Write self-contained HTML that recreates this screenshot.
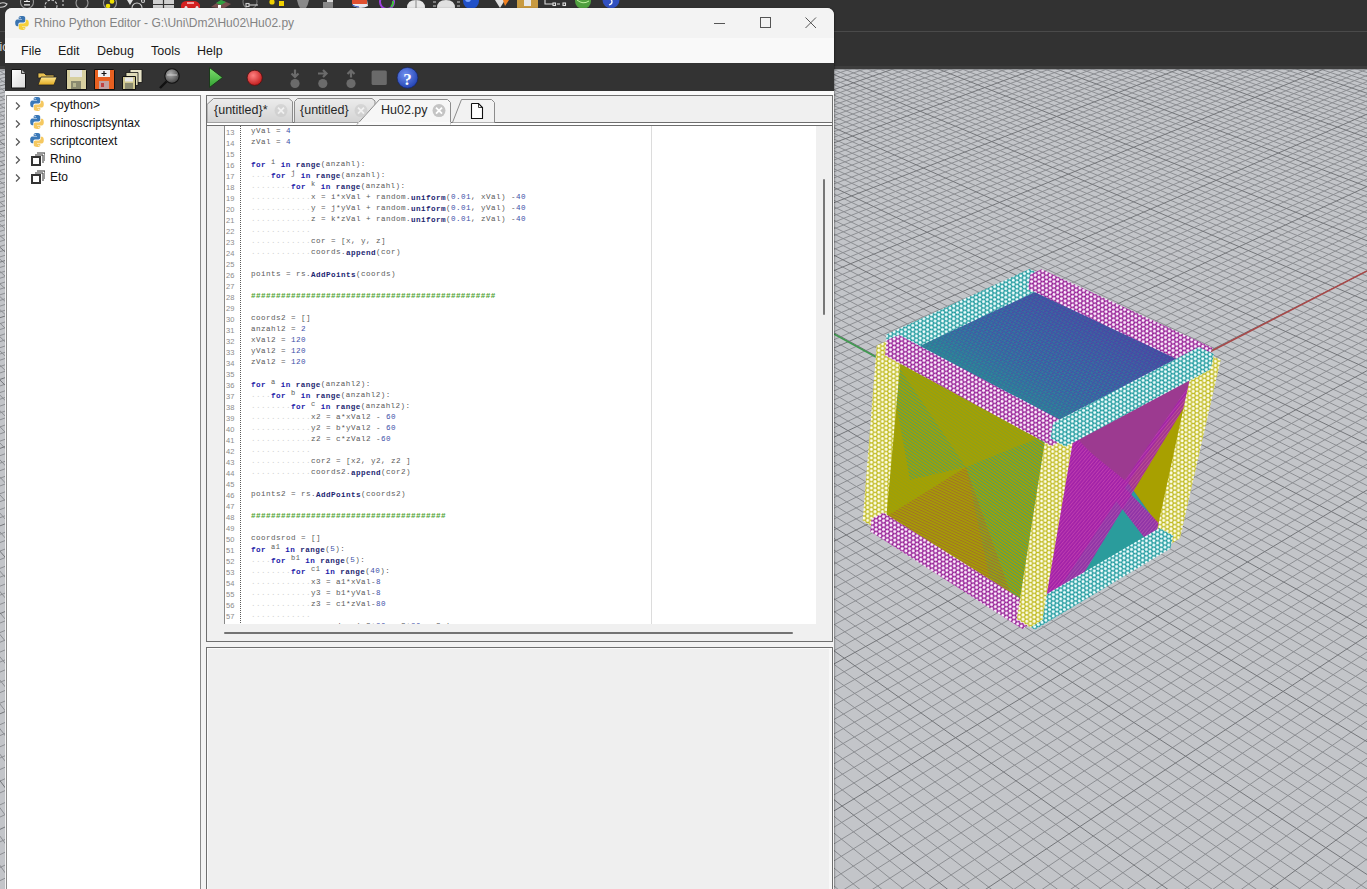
<!DOCTYPE html><html><head><meta charset="utf-8"><style>
*{margin:0;padding:0;box-sizing:border-box}
html,body{width:1367px;height:889px;overflow:hidden;background:#323232;font-family:"Liberation Sans",sans-serif}
.abs{position:absolute}
#vp{position:absolute;left:0;top:66px;width:1367px;height:823px;background:#c3c5c9;border-top:3px solid #3d3d3d;overflow:hidden}
#win{position:absolute;left:5px;top:8px;width:829px;height:881px;background:#f0f0f0;border-radius:7px 7px 0 0;overflow:hidden;box-shadow:1px 0 1.5px rgba(0,0,0,.3)}
#title{position:absolute;left:0;top:0;width:829px;height:30px;background:#f3f3f3}
#title .t{position:absolute;left:29px;top:8px;font-size:12px;color:#838383;white-space:nowrap}
#menu{position:absolute;left:0;top:30px;width:829px;height:25px;background:#f9f9f9}
#menu span{position:absolute;top:6px;font-size:12.5px;color:#1a1a1a}
#tb{position:absolute;left:0;top:55px;width:829px;height:28px;background:#333333}
#wstrip{position:absolute;left:0;top:83px;width:829px;height:4px;background:#fafafa}
#left{position:absolute;left:1px;top:87px;width:195px;height:800px;background:#fff;border:1px solid #8a8a8a}
.tr{position:absolute;left:0;font-size:12px;color:#111;white-space:nowrap}
#ed{position:absolute;left:201px;top:87px;width:627px;height:547px;border:1px solid #6f6f6f;background:#f0f0f0}
#code{position:absolute;left:0;top:30px;width:609px;height:498px;background:#fff;overflow:hidden}
#gut{position:absolute;left:0;top:0;width:18px;height:499px;background:#f0f0f0;border-right:1px solid #8a8a8a}
.ln{position:absolute;left:19px;width:20px;font-family:"Liberation Sans",sans-serif;font-size:7.5px;color:#8c8c8c;line-height:11px;height:11px}
.cl{position:absolute;left:44px;font-family:"Liberation Mono",monospace;font-size:7.6px;letter-spacing:0.44px;line-height:11px;height:11px;color:#5a5a5a;white-space:pre}
.cl .d{color:#cfcfcf}
.cl .k{color:#1c1ca8;font-weight:bold;position:relative;top:1px}
.cl .f{color:#1c2670;font-weight:bold;position:relative;top:1px}
.cl .v{position:relative;top:-2px;font-size:7px}
.cl .n{color:#4050a8}
.cl .c{color:#4aa02a;font-weight:bold}

.tabt{position:absolute;top:7px;font-size:12.5px;color:#262626;white-space:nowrap}
#dots{position:absolute;left:33px;top:0;width:1px;height:499px;background:repeating-linear-gradient(to bottom,#5a5a5a 0,#5a5a5a 1px,transparent 1px,transparent 2px)}
#edge{position:absolute;left:444px;top:0;width:1px;height:499px;background:#dcdcdc}
#vsb{position:absolute;left:609px;top:30px;width:16px;height:499px;background:#f0f0f0}
#vth{position:absolute;left:7px;top:53px;width:2px;height:136px;background:#777;border-radius:1px}
#hsb{position:absolute;left:0;top:529px;width:625px;height:16px;background:#f0f0f0}
#hth{position:absolute;left:17px;top:7px;width:569px;height:2px;background:#737373;border-radius:1px}
#out{position:absolute;left:201px;top:639px;width:627px;height:250px;border:1px solid #6f6f6f;border-bottom:none;background:#efefef;box-shadow:inset 1px 1px 0 #fbfbfb,inset -3px 0 0 #f8f8f8}
#win{background:#f3f3f3}

</style></head><body>
<svg class="abs" style="left:0;top:0" width="1367" height="32">
<rect width="1367" height="31" fill="#323232"/>
<rect y="31" width="1367" height="1" fill="#4a4a4a"/>
<g fill="none" stroke="#cfcfcf" stroke-width="1.1">
<path d="M-2 5q4-4 9-1q-2 4-9 3"/>
<circle cx="27" cy="2" r="6.5" stroke="#9a9a9a"/><path d="M24 1.5h6M24 4.8h6M27 -1v3" stroke="#f0f0f0" stroke-width="1.2"/>
<circle cx="51" cy="6" r="6" stroke-dasharray="2.5 1.5"/><path d="M63 0v2M63 4v2M63 8v1"/>
<circle cx="82" cy="3" r="6" stroke="#9a9a9a"/>
<circle cx="110" cy="3" r="6.5" stroke="#9a9a9a"/>
<circle cx="137" cy="8" r="5"/><circle cx="143" cy="1" r="1.5"/>
<circle cx="250" cy="2" r="7" stroke="#777"/><path d="M249 5h9" /><rect x="246" y="3.5" width="3" height="3"/>
<path d="M545 0v4h8M557 4h3" stroke="#ddd"/><rect x="553" y="3" width="2.5" height="2.5" stroke="#ddd"/><rect x="563" y="3" width="2.5" height="2.5" stroke="#ddd"/>
</g>
<circle cx="108" cy="6" r="2.3" fill="#f0e000"/><circle cx="112" cy="1.5" r="2.3" fill="#f0e000"/>
<path d="M127 0h6l-3 5z" fill="#e0e0e0"/>
<rect x="153" y="0" width="21" height="9" fill="#d0d0d0"/><path d="M163.5 0v9M153 4.5h21" stroke="#323232" stroke-width="1.2"/>
<path d="M181 5q1-4 6-4h7q4 0 6 4v3h-19z" fill="#d42020"/><circle cx="186" cy="7.5" r="1.5" fill="#eee"/><circle cx="197" cy="7.5" r="1.5" fill="#eee"/><rect x="187" y="2" width="7" height="2" fill="#f0a0a0"/>
<path d="M211 7l10-7 10 4-8 5z" fill="#7a5050"/><path d="M216 3l5-3 5 2-5 3z" fill="#30a040"/><rect x="218" y="5" width="3" height="3" fill="#fff"/>
<circle cx="272" cy="2" r="2.6" fill="#f0d000"/><rect x="279" y="1" width="5" height="5" fill="#f0d000"/>
<path d="M297 0h12q-1 5-3 8h-6q-2-3-3-8z" fill="#8a8a8a"/>
<rect x="327" y="0" width="6" height="8" fill="#d8d8d8"/><rect x="323" y="2" width="10" height="6" fill="#888"/>
<path d="M352 0h15l1 6q-7 4-15 0z" fill="#e8e8f0"/><path d="M352 0h15v4h-15z" fill="#e05030"/><path d="M352 5q4 2 7 2" stroke="#3050c0" fill="none"/>
<circle cx="387" cy="2" r="7" fill="none" stroke="#a040e0" stroke-width="2"/><path d="M381 -2a7 7 0 0 1 12 0" stroke="#f0d000" stroke-width="2" fill="none"/><path d="M393 1a7 7 0 0 1 -2 6" stroke="#40c040" stroke-width="2" fill="none"/>
<path d="M407 8q0-8 9-8q9 0 9 8z" fill="#e8e8e8"/><path d="M416 0v8" stroke="#888"/>
<path d="M437 8q0-8 9-8q9 0 9 8z" fill="#e0e0e0"/><path d="M433 2h3M433 6h3M457 2h3M457 6h3" stroke="#ccc"/>
<circle cx="471" cy="1" r="8" fill="#2050c8"/><circle cx="468" cy="-1" r="3" fill="#80a8ff"/>
<path d="M495 0h10l-5 8z" fill="#e0e0e0"/><path d="M503 0h6l-4 6z" fill="#f08020"/>
<rect x="517" y="0" width="21" height="8" fill="#c89a40"/><rect x="524" y="0" width="7" height="6" fill="#e8e8e8"/>
<circle cx="583" cy="1" r="8" fill="#50a040"/><path d="M577 0q6 5 12 1" stroke="#c0f0a0" fill="none"/>
<circle cx="611" cy="0" r="8.5" fill="#3050c0"/><path d="M609 -1q3 0 3 3q0 2-3 3" stroke="#fff" stroke-width="1.3" fill="none"/>
</svg>
<div class="abs" style="left:-0.5px;top:40px;font-size:12px;color:#d8d8d8">ic</div>
<div id="vp"><svg class="abs" style="left:0;top:0" width="1367" height="820"><rect x="0" y="0" width="1367" height="1" fill="#9a9c9f"/><path d="M443.7 1702.0L-548.8 124.4M465.0 1684.4L-538.2 121.7M486.0 1667.1L-527.7 118.9M506.7 1649.9L-517.2 116.2M527.2 1633.0L-506.7 113.5M547.3 1616.3L-496.4 110.9M567.3 1599.9L-486.0 108.2M587.0 1583.6L-475.8 105.5M606.4 1567.5L-465.5 102.9M644.5 1536.0L-445.2 97.7M663.2 1520.5L-435.2 95.1M681.7 1505.2L-425.1 92.5M700.0 1490.2L-415.2 89.9M718.0 1475.2L-405.2 87.3M735.8 1460.5L-395.4 84.8M753.4 1446.0L-385.5 82.2M770.8 1431.6L-375.7 79.7M788.0 1417.4L-366.0 77.2M821.8 1389.4L-346.7 72.2M838.4 1375.7L-337.1 69.7M854.8 1362.2L-327.5 67.3M871.0 1348.8L-318.0 64.8M887.0 1335.5L-308.5 62.4M902.8 1322.4L-299.1 59.9M918.5 1309.5L-289.8 57.5M934.0 1296.7L-280.4 55.1M949.3 1284.0L-271.1 52.7M979.4 1259.1L-252.7 47.9M994.2 1246.9L-243.5 45.6M1008.9 1234.8L-234.4 43.2M1023.3 1222.8L-225.4 40.9M1037.7 1210.9L-216.3 38.5M1051.9 1199.2L-207.3 36.2M1065.9 1187.6L-198.4 33.9M1079.7 1176.1L-189.5 31.6M1093.5 1164.8L-180.6 29.3M1120.5 1142.4L-163.0 24.8M1133.8 1131.4L-154.3 22.5M1147.0 1120.6L-145.6 20.3M1160.0 1109.8L-136.9 18.0M1172.9 1099.1L-128.3 15.8M1185.6 1088.6L-119.7 13.6M1198.3 1078.1L-111.2 11.4M1210.8 1067.8L-102.7 9.2M1223.1 1057.6L-94.2 7.0M1247.5 1037.4L-77.4 2.7M1259.5 1027.5L-69.0 0.5M1271.4 1017.7L-60.7 -1.7M1283.2 1007.9L-52.4 -3.8M1294.9 998.3L-44.2 -5.9M1306.4 988.7L-36.0 -8.0M1317.8 979.3L-27.8 -10.2M1329.2 969.9L-19.7 -12.3M1340.4 960.6L-11.5 -14.3M1362.5 942.4L4.5 -18.5M1373.4 933.3L12.5 -20.6M1384.2 924.4L20.5 -22.6M1394.9 915.6L28.4 -24.7M1405.5 906.8L36.3 -26.7M1416.0 898.1L44.2 -28.7M1426.4 889.5L52.0 -30.8M1436.7 881.0L59.8 -32.8M1446.9 872.6L67.5 -34.8M1467.1 855.9L83.0 -38.8M1477.0 847.7L90.6 -40.7M1486.8 839.6L98.2 -42.7M1496.6 831.5L105.8 -44.7M1506.3 823.5L113.4 -46.6M1515.9 815.6L120.9 -48.6M1525.4 807.7L128.4 -50.5M1534.8 799.9L135.9 -52.4M1544.1 792.2L143.3 -54.3M1562.5 777.0L158.1 -58.2M1571.6 769.4L165.4 -60.0M1580.6 762.0L172.7 -61.9M1589.6 754.6L180.0 -63.8M1598.5 747.3L187.3 -65.7M1607.2 740.0L194.5 -67.6M1616.0 732.8L201.7 -69.4M1624.6 725.7L208.8 -71.3M1633.2 718.6L216.0 -73.1M1650.1 704.6L230.1 -76.8M1658.4 697.7L237.2 -78.6M1666.7 690.8L244.2 -80.4M1674.9 684.0L251.2 -82.2M1683.1 677.3L258.1 -84.0M1691.2 670.6L265.0 -85.8M1699.2 664.0L271.9 -87.6M1707.2 657.4L278.8 -89.3M1715.1 650.9L285.7 -91.1M1730.6 638.0L299.3 -94.6M1738.4 631.6L306.0 -96.4M1746.0 625.3L312.8 -98.1M1753.6 619.0L319.5 -99.8M1761.1 612.8L326.2 -101.6M1768.6 606.6L332.8 -103.3M1776.0 600.5L339.4 -105.0M1783.3 594.4L346.0 -106.7M1790.6 588.4L352.6 -108.4M1805.0 576.5L365.7 -111.8M1812.2 570.6L372.2 -113.5M1819.2 564.7L378.7 -115.1M1826.2 558.9L385.1 -116.8M1833.2 553.2L391.5 -118.4M1840.1 547.5L397.9 -120.1M1847.0 541.8L404.3 -121.7M1853.8 536.2L410.6 -123.4M1860.5 530.6L417.0 -125.0M1873.9 519.5L429.5 -128.3M1880.5 514.0L435.8 -129.9M1887.1 508.6L442.0 -131.5M1893.6 503.2L448.2 -133.1M1900.1 497.9L454.4 -134.7M1906.5 492.6L460.5 -136.3M1912.9 487.3L466.7 -137.9M1919.2 482.1L472.8 -139.4M1925.5 476.9L478.9 -141.0M1937.9 466.6L491.0 -144.1M1944.0 461.5L497.0 -145.7M1950.1 456.5L503.0 -147.2M1956.2 451.5L508.9 -148.8M1962.2 446.5L514.9 -150.3M1968.2 441.6L520.8 -151.8M1974.1 436.6L526.7 -153.4M1980.0 431.8L532.6 -154.9M1985.9 426.9L538.5 -156.4M1997.5 417.4L550.1 -159.4M2003.2 412.6L555.9 -160.9M2008.9 407.9L561.7 -162.4M2014.5 403.2L567.4 -163.9M2020.2 398.6L573.2 -165.4M2025.7 394.0L578.9 -166.8M2031.3 389.4L584.6 -168.3M2036.8 384.8L590.2 -169.8M2042.2 380.3L595.9 -171.2M2053.1 371.4L607.1 -174.1M2058.4 366.9L612.7 -175.6M2063.8 362.5L618.2 -177.0M2069.0 358.2L623.8 -178.4M2074.3 353.8L629.3 -179.9M2079.5 349.5L634.8 -181.3M2084.7 345.2L640.3 -182.7M2089.8 341.0L645.8 -184.1M2095.0 336.7L651.2 -185.5M2105.1 328.4L662.0 -188.3M2110.1 324.2L667.4 -189.7M2115.1 320.1L672.8 -191.1M2120.1 316.0L678.1 -192.5M2125.0 311.9L683.5 -193.8M2129.9 307.9L688.8 -195.2M2134.7 303.9L694.1 -196.6M2139.6 299.9L699.3 -197.9M2144.4 295.9L704.6 -199.3M2153.9 288.0L715.0 -202.0M2158.6 284.1L720.2 -203.3M2163.3 280.3L725.4 -204.7M2167.9 276.4L730.6 -206.0M2172.6 272.6L735.7 -207.3M2177.2 268.8L740.8 -208.7M2181.7 265.0L746.0 -210.0M2186.3 261.3L751.0 -211.3M2190.8 257.5L756.1 -212.6M2199.7 250.1L766.2 -215.2M457.7 1712.6L2207.9 253.4M442.9 1689.3L2193.8 248.9M428.4 1666.3L2179.9 244.3M414.2 1643.8L2166.0 239.8M400.2 1621.7L2152.3 235.4M386.5 1600.0L2138.7 231.0M373.0 1578.6L2125.2 226.6M359.7 1557.7L2111.8 222.2M346.7 1537.0L2098.5 217.9M321.3 1496.9L2072.2 209.4M308.9 1477.3L2059.3 205.2M296.8 1458.0L2046.4 201.0M284.8 1439.1L2033.7 196.9M273.0 1420.4L2021.0 192.7M261.4 1402.1L2008.4 188.7M250.0 1384.1L1996.0 184.6M238.8 1366.3L1983.6 180.6M227.8 1348.9L1971.4 176.6M206.2 1314.7L1947.1 168.7M195.7 1298.1L1935.1 164.8M185.3 1281.7L1923.2 161.0M175.1 1265.5L1911.4 157.2M165.1 1249.6L1899.7 153.4M155.2 1233.9L1888.1 149.6M145.4 1218.5L1876.6 145.8M135.8 1203.3L1865.1 142.1M126.3 1188.3L1853.8 138.4M107.8 1159.0L1831.3 131.1M98.7 1144.6L1820.2 127.5M89.8 1130.5L1809.2 123.9M81.0 1116.6L1798.3 120.4M72.3 1102.8L1787.4 116.9M63.7 1089.3L1776.6 113.4M55.3 1075.9L1765.9 109.9M46.9 1062.7L1755.3 106.4M38.7 1049.7L1744.7 103.0M22.6 1024.2L1723.9 96.2M14.7 1011.7L1713.6 92.9M7.0 999.4L1703.3 89.5M-0.7 987.3L1693.1 86.2M-8.3 975.3L1683.0 83.0M-15.8 963.4L1673.0 79.7M-23.2 951.8L1663.0 76.5M-30.5 940.2L1653.1 73.3M-37.7 928.8L1643.3 70.1M-51.8 906.5L1623.9 63.8M-58.7 895.5L1614.3 60.6M-65.5 884.7L1604.7 57.5M-72.3 874.0L1595.2 54.4M-79.0 863.5L1585.8 51.4M-85.6 853.1L1576.5 48.3M-92.1 842.8L1567.2 45.3M-98.5 832.6L1557.9 42.3M-104.8 822.5L1548.8 39.4M-117.3 802.8L1530.6 33.5M-123.5 793.1L1521.6 30.5M-129.5 783.5L1512.7 27.6M-135.5 774.0L1503.8 24.8M-141.4 764.7L1495.0 21.9M-147.3 755.4L1486.3 19.1M-153.0 746.3L1477.6 16.2M-158.8 737.2L1469.0 13.4M-164.4 728.3L1460.4 10.6M-175.5 710.7L1443.4 5.1M-181.0 702.0L1435.0 2.4M-186.4 693.5L1426.6 -0.3M-191.7 685.0L1418.3 -3.0M-197.0 676.7L1410.1 -5.7M-202.2 668.4L1401.9 -8.4M-207.4 660.2L1393.7 -11.0M-212.5 652.1L1385.6 -13.6M-217.6 644.1L1377.6 -16.2M-227.5 628.4L1361.7 -21.4M-232.4 620.6L1353.8 -24.0M-237.3 613.0L1345.9 -26.5M-242.1 605.4L1338.1 -29.1M-246.8 597.9L1330.4 -31.6M-251.5 590.4L1322.7 -34.1M-256.2 583.1L1315.1 -36.6M-260.8 575.8L1307.4 -39.0M-265.3 568.6L1299.9 -41.5M-274.3 554.4L1284.9 -46.3M-278.7 547.4L1277.5 -48.8M-283.1 540.5L1270.1 -51.2M-287.4 533.6L1262.8 -53.5M-291.7 526.8L1255.5 -55.9M-296.0 520.1L1248.3 -58.2M-300.2 513.5L1241.1 -60.6M-304.3 506.9L1233.9 -62.9M-308.5 500.3L1226.8 -65.2M-316.6 487.5L1212.7 -69.8M-320.6 481.1L1205.7 -72.1M-324.6 474.9L1198.8 -74.3M-328.5 468.6L1191.9 -76.6M-332.4 462.5L1185.0 -78.8M-336.2 456.4L1178.2 -81.0M-340.1 450.3L1171.4 -83.2M-343.8 444.3L1164.7 -85.4M-347.6 438.4L1158.0 -87.6M-355.0 426.7L1144.7 -91.9M-358.6 420.9L1138.1 -94.0M-362.2 415.2L1131.5 -96.2M-365.8 409.6L1125.0 -98.3M-369.4 403.9L1118.5 -100.4M-372.9 398.4L1112.1 -102.5M-376.4 392.9L1105.7 -104.6M-379.8 387.4L1099.3 -106.6M-383.3 382.0L1093.0 -108.7M-390.0 371.3L1080.4 -112.8M-393.4 366.0L1074.2 -114.8M-396.7 360.8L1068.0 -116.8M-399.9 355.6L1061.8 -118.8M-403.2 350.4L1055.7 -120.8M-406.4 345.3L1049.6 -122.8M-409.6 340.3L1043.6 -124.7M-412.8 335.3L1037.5 -126.7M-415.9 330.3L1031.6 -128.6M-422.1 320.5L1019.7 -132.5M-425.2 315.6L1013.8 -134.4M-428.2 310.8L1007.9 -136.3M-431.2 306.1L1002.1 -138.2M-434.2 301.3L996.3 -140.1M-437.2 296.7L990.5 -142.0M-440.1 292.0L984.8 -143.8M-443.0 287.4L979.1 -145.7M-445.9 282.8L973.4 -147.5M-451.6 273.8L962.1 -151.2M-454.5 269.3L956.5 -153.0M-457.3 264.9L951.0 -154.8M-460.0 260.5L945.5 -156.6M-462.8 256.1L940.0 -158.4M-465.5 251.8L934.5 -160.2M-468.2 247.5L929.0 -161.9M-470.9 243.3L923.6 -163.7M-473.6 239.1L918.2 -165.4M-478.9 230.7L907.6 -168.9M-481.5 226.6L902.2 -170.6M-484.1 222.5L897.0 -172.4M-486.6 218.4L891.7 -174.1M-489.2 214.4L886.5 -175.8M-491.7 210.4L881.3 -177.4M-494.2 206.4L876.1 -179.1M-496.7 202.5L871.0 -180.8M-499.2 198.6L865.9 -182.5M-504.1 190.8L855.7 -185.8M-506.5 187.0L850.7 -187.4M-508.9 183.2L845.7 -189.0M-511.2 179.4L840.7 -190.6M-513.6 175.7L835.7 -192.3M-516.0 172.0L830.8 -193.9M-518.3 168.3L825.9 -195.5M-520.6 164.7L821.0 -197.0M-522.9 161.0L816.1 -198.6M-527.4 153.8L806.4 -201.8M-529.7 150.3L801.6 -203.3M-531.9 146.8L796.9 -204.9M-534.1 143.2L792.1 -206.4M-536.3 139.8L787.4 -208.0M-538.5 136.3L782.7 -209.5M-540.7 132.9L778.0 -211.0M-542.8 129.5L773.3 -212.5M-545.0 126.1L768.7 -214.0" stroke="#8a8c90" stroke-width="0.95" fill="none"/><path d="M625.6 1551.7L-455.4 100.3M805.0 1403.3L-356.3 74.7M964.4 1271.5L-261.9 50.3M1107.1 1153.6L-171.8 27.0M1235.4 1047.4L-85.8 4.8M1351.5 951.5L-3.5 -16.4M1457.0 864.2L75.3 -36.8M1553.4 784.5L150.7 -56.3M1641.7 711.5L223.1 -74.9M1722.9 644.4L292.5 -92.9M1797.8 582.4L359.2 -110.1M1867.3 525.0L423.3 -126.6M1931.7 471.7L484.9 -142.6M1991.7 422.1L544.3 -157.9M2047.7 375.8L601.5 -172.7M2100.1 332.5L656.6 -186.9M2149.1 291.9L709.8 -200.7M2195.3 253.8L761.2 -213.9M333.9 1516.8L2085.3 213.6M216.9 1331.7L1959.2 172.7M117.0 1173.5L1842.5 134.8M30.6 1036.9L1734.3 99.6M-44.8 917.6L1633.6 66.9M-111.1 812.6L1539.7 36.4M-170.0 719.4L1451.9 7.9M-222.6 636.2L1369.6 -18.8M-269.8 561.4L1292.4 -43.9M-312.5 493.9L1219.7 -67.5M-351.3 432.5L1151.3 -89.7M-386.7 376.6L1086.7 -110.7M-419.0 325.4L1025.6 -130.6M-448.8 278.3L967.7 -149.4M-476.2 234.9L912.9 -167.2M-501.6 194.7L860.8 -184.1M-525.2 157.4L811.3 -200.2M-547.1 122.7L764.1 -215.5" stroke="#74767a" stroke-width="1.0" fill="none"/><path d="M834.0 265.0L890.0 295.8" stroke="#3f9a4f" stroke-width="1.6"/><path d="M1195.0 290.5L1367.0 201.9" stroke="#a84848" stroke-width="1.6"/></svg></div><svg class="abs" style="left:0;top:0" width="1367" height="889"><defs><pattern id="pm" width="4.3" height="7.4" patternUnits="userSpaceOnUse" patternTransform="rotate(30)"><rect width="4.3" height="7.4" fill="#941c94"/><circle cx="2.15" cy="1.85" r="1.6" fill="#fdf0fd"/><circle cx="0" cy="5.55" r="1.6" fill="#fdf0fd"/><circle cx="4.3" cy="5.55" r="1.6" fill="#fdf0fd"/></pattern>
<pattern id="pc" width="4.3" height="7.4" patternUnits="userSpaceOnUse" patternTransform="rotate(-30)"><rect width="4.3" height="7.4" fill="#1f9a9e"/><circle cx="2.15" cy="1.85" r="1.6" fill="#f0fdfd"/><circle cx="0" cy="5.55" r="1.6" fill="#f0fdfd"/><circle cx="4.3" cy="5.55" r="1.6" fill="#f0fdfd"/></pattern>
<pattern id="py" width="4.3" height="7.4" patternUnits="userSpaceOnUse" patternTransform="rotate(90)"><rect width="4.3" height="7.4" fill="#c0ba20"/><circle cx="2.15" cy="1.85" r="1.65" fill="#fdfde8"/><circle cx="0" cy="5.55" r="1.65" fill="#fdfde8"/><circle cx="4.3" cy="5.55" r="1.65" fill="#fdfde8"/></pattern>
<pattern id="ht" width="4" height="3.2" patternUnits="userSpaceOnUse" patternTransform="rotate(28)"><rect width="4" height="3.2" fill="#2f8f92"/><rect y="0" width="4" height="1.1" fill="#3a5aa8"/><rect x="0" y="1.6" width="2" height="0.9" fill="#6a3a9a"/></pattern>
<pattern id="hteal" width="2.6" height="2.6" patternUnits="userSpaceOnUse" patternTransform="rotate(35)"><rect y="0" width="2.6" height="1" fill="#2aa08a"/></pattern>
<pattern id="hred" width="2.6" height="2.6" patternUnits="userSpaceOnUse" patternTransform="rotate(25)"><rect y="0" width="2.6" height="1.1" fill="#9a2a6a"/></pattern>
<pattern id="hmag" width="2.6" height="2.6" patternUnits="userSpaceOnUse" patternTransform="rotate(-50)"><rect width="2.6" height="2.6" fill="#a020a8"/><rect y="0" width="2.6" height="1" fill="#c040b0"/></pattern>
<linearGradient id="gtop" gradientUnits="userSpaceOnUse" x1="1080" y1="300" x2="1010" y2="410"><stop offset="0" stop-color="#5030a8"/><stop offset=".55" stop-color="#3a50b0" stop-opacity=".6"/><stop offset="1" stop-color="#209a90"/></linearGradient></defs><path d="M886.0 348.0 L1048.0 434.0 L1020.0 620.0 L871.0 526.0Z" fill="#a6a000"/><path d="M886.0 348.0 L966.0 467.0 L871.0 526.0Z" fill="url(#hteal)" opacity=".12"/><path d="M886.0 348.0 L1048.0 434.0 L966.0 467.0Z" fill="url(#hteal)" opacity=".22"/><path d="M886.0 348.0 L966.0 467.0 L910.0 480.0Z" fill="url(#hteal)" opacity=".6"/><path d="M1048.0 434.0 L1020.0 620.0 L966.0 467.0Z" fill="url(#hteal)" opacity=".75"/><path d="M871.0 526.0 L1020.0 620.0 L966.0 467.0Z" fill="url(#hred)" opacity=".4"/><path d="M990.0 580.0 L1020.0 620.0 L966.0 467.0Z" fill="url(#hteal)" opacity=".35"/><path d="M1070.0 436.0 L1208.0 362.0 L1170.0 542.0 L1040.0 618.0Z" fill="#a52aa5"/><path d="M1070.0 436.0 L1208.0 362.0 L1128.0 483.0Z" fill="#9c3a90"/><path d="M1208.0 362.0 L1170.0 542.0 L1128.0 483.0Z" fill="#a8a000"/><path d="M1170.0 542.0 L1040.0 618.0 L1128.0 483.0Z" fill="#2a9c9c"/><path d="M1067.5 438.2 L1151.7 547.2 L1168.3 532.8 L1072.5 433.8Z" fill="url(#hmag)" opacity=".85"/><path d="M1205.5 360.4 L1041.6 604.6 L1058.4 615.4 L1210.5 363.6Z" fill="url(#hmag)" opacity=".85"/><path d="M1070.0 436.0 L1040.0 618.0 L1128.0 483.0Z" fill="url(#hmag)" opacity=".9"/><path d="M888.8 341.7 L1035.2 274.2 L1209.3 354.7 L1060.3 433.4Z" fill="url(#ht)"/><path d="M888.8 341.7 L1035.2 274.2 L1209.3 354.7 L1060.3 433.4Z" fill="url(#gtop)" opacity=".55"/><path d="M885.1 349.4 L886.4 334.4 L1029.6 268.9 L1042.7 274.9 L1040.5 289.5 L897.9 356.3Z" fill="url(#pc)"/><path d="M1028.2 289.1 L1030.2 274.5 L1041.5 269.3 L1212.1 347.5 L1208.7 362.8 L1197.3 368.8Z" fill="url(#pm)"/><path d="M862.7 520.5 L876.7 345.6 L889.1 339.9 L901.8 346.6 L885.9 521.8 L874.3 527.9Z" fill="url(#py)"/><path d="M1155.6 536.9 L1194.2 358.7 L1205.5 352.7 L1220.7 359.7 L1180.0 538.3 L1169.4 544.7Z" fill="url(#py)"/><path d="M870.4 531.5 L871.5 518.7 L883.2 512.6 L1036.4 608.6 L1034.2 621.8 L1022.3 628.9Z" fill="url(#pm)"/><path d="M1021.2 621.0 L1023.4 607.8 L1159.4 527.9 L1173.3 535.6 L1170.4 548.6 L1034.9 629.7Z" fill="url(#pc)"/><path d="M1016.8 618.9 L1045.6 436.8 L1058.3 430.1 L1073.4 438.2 L1042.3 620.5 L1030.5 627.6Z" fill="url(#py)"/><path d="M885.2 355.6 L886.5 340.6 L899.1 334.9 L1067.2 423.6 L1064.6 439.3 L1051.8 446.1Z" fill="url(#pm)"/><path d="M1050.5 438.6 L1053.0 422.9 L1198.7 346.9 L1214.0 354.0 L1210.6 369.3 L1065.6 446.7Z" fill="url(#pc)"/></svg><div id="win">
<div id="title"><svg class="abs" style="left:9px;top:7px" width="16" height="16" viewBox="0 0 16 16">
<path d="M7.9 1C4.5 1 4.7 2.5 4.7 2.5v1.5h3.3v.5H3.4S1.2 4.3 1.2 7.8s1.9 3.4 1.9 3.4h1.2V9.5s-.1-1.9 1.9-1.9h3.2s1.8 0 1.8-1.8V2.9S11.6 1 7.9 1zM6.1 2.1a.6.6 0 1 1 0 1.2.6.6 0 0 1 0-1.2z" fill="#3a74b0"/>
<path d="M8.1 15c3.4 0 3.2-1.5 3.2-1.5V12H8v-.5h4.6s2.2.2 2.2-3.3-1.9-3.4-1.9-3.4h-1.2v1.7s.1 1.9-1.9 1.9H6.6s-1.8 0-1.8 1.8v2.9S4.4 15 8.1 15zm1.8-1.1a.6.6 0 1 1 0-1.2.6.6 0 0 1 0 1.2z" fill="#f5d03a"/></svg>
<div class="t">Rhino Python Editor - G:\Uni\Dm2\Hu02\Hu02.py</div>
<svg class="abs" style="left:708px;top:8px" width="14" height="14"><line x1="1" y1="7.5" x2="12" y2="7.5" stroke="#555" stroke-width="1"/></svg>
<svg class="abs" style="left:754px;top:8px" width="14" height="14"><rect x="1.5" y="1.5" width="10" height="10" fill="none" stroke="#555" stroke-width="1"/></svg>
<svg class="abs" style="left:799px;top:8px" width="14" height="14"><path d="M1.5 1.5L12 12M12 1.5L1.5 12" stroke="#555" stroke-width="1"/></svg>
</div>
<div id="menu"><span style="left:16px">File</span><span style="left:53px">Edit</span><span style="left:92px">Debug</span><span style="left:146px">Tools</span><span style="left:192px">Help</span></div>
<div id="tb"><svg class="abs" style="left:0;top:0" width="829" height="28">
<defs>
<linearGradient id="gdoc" x1="0" y1="0" x2="1" y2="1"><stop offset="0" stop-color="#ffffff"/><stop offset="1" stop-color="#d8d8d8"/></linearGradient>
<linearGradient id="gfold" x1="0" y1="0" x2="0" y2="1"><stop offset="0" stop-color="#ffe890"/><stop offset="1" stop-color="#e0a820"/></linearGradient>
<linearGradient id="gplay" x1="0" y1="0" x2="0" y2="1"><stop offset="0" stop-color="#80e070"/><stop offset="1" stop-color="#30a030"/></linearGradient>
<radialGradient id="grec" cx=".4" cy=".35" r=".7"><stop offset="0" stop-color="#ff8080"/><stop offset="1" stop-color="#c01818"/></radialGradient>
<radialGradient id="ghelp" cx=".4" cy=".35" r=".7"><stop offset="0" stop-color="#7090f0"/><stop offset="1" stop-color="#2040b0"/></radialGradient>
<radialGradient id="glens" cx=".4" cy=".35" r=".7"><stop offset="0" stop-color="#b0b0b0"/><stop offset="1" stop-color="#404040"/></radialGradient>
</defs>
<path d="M6.5 6.5h10l4 4v14.5h-14z" fill="url(#gdoc)" stroke="#111" stroke-width="1"/><path d="M16.5 6.5v4h4" fill="#bbb" stroke="#111" stroke-width=".8"/>
<path d="M33 10h6l2 2h8v3H33z" fill="#e8c050" stroke="#222" stroke-width=".8"/><path d="M33 22l3-8h16l-3 8z" fill="url(#gfold)" stroke="#222" stroke-width=".8"/>
<g transform="translate(61,6)"><path d="M.5 .5h19l1 1v19h-20z" fill="#d8d0a0" stroke="#111" stroke-width="1"/><rect x="4" y="1" width="12" height="7" fill="#e8e8e8"/><rect x="5" y="12" width="10" height="8" fill="#8a8a70"/><rect x="7" y="14" width="3" height="4" fill="#b8b890"/></g>
<g transform="translate(89,6)"><path d="M.5 .5h19l1 1v19h-20z" fill="#e86020" stroke="#111" stroke-width="1"/><rect x="4" y="1" width="12" height="7" fill="#f0f0f0"/><path d="M10 2v5M7.5 4.5h5" stroke="#111" stroke-width="1.2"/><rect x="5" y="12" width="10" height="8" fill="#c0a0a0"/><rect x="7" y="14" width="3" height="4" fill="#c04040"/></g>
<g transform="translate(117,6)"><path d="M8 .5h12v13h-12z" fill="#e8e4c8" stroke="#111" stroke-width=".8"/><path d="M4 3.5h12v13h-12z" fill="#e0dcb8" stroke="#111" stroke-width=".8"/><path d="M.5 7.5h13v13h-13z" fill="#d0c890" stroke="#111" stroke-width="1"/><rect x="3" y="14" width="8" height="6" fill="#8a8a70"/><rect x="3" y="8.5" width="8" height="4" fill="#e8e8e8"/></g>
<path d="M155 25l6.5-6.5" stroke="#111" stroke-width="2.4"/><circle cx="167" cy="13" r="7.2" fill="url(#glens)" stroke="#111" stroke-width="1.1"/><path d="M162 12h10" stroke="#ddd" stroke-width=".8"/>
<path d="M204.5 4.5v20l13-10z" fill="url(#gplay)" stroke="#1a3a1a" stroke-width="1"/>
<circle cx="249.7" cy="14.8" r="7.6" fill="url(#grec)" stroke="#501010" stroke-width=".8"/>
<g fill="#6b6b6b" stroke="#6b6b6b"><circle cx="290" cy="20.5" r="4.6" stroke="none"/><path d="M290 6.5v7M286.5 10.5l3.5 3.5 3.5-3.5" fill="none" stroke-width="2.2"/>
<circle cx="317.8" cy="20.5" r="4.6" stroke="none"/><path d="M313 10.5h8M318 7l3.5 3.5-3.5 3.5" fill="none" stroke-width="2.2"/>
<circle cx="346" cy="20.5" r="4.6" stroke="none"/><path d="M346 14.5v-7M342.5 11l3.5-3.5 3.5 3.5" fill="none" stroke-width="2.2"/></g>
<rect x="366.6" y="7.6" width="15.2" height="14.3" rx="1.5" fill="#6a6a6a"/>
<circle cx="402.5" cy="14.8" r="10.4" fill="url(#ghelp)" stroke="#102060" stroke-width=".6"/><text x="402.5" y="22" font-family="Liberation Serif" font-size="17" font-weight="bold" fill="#fff" text-anchor="middle">?</text>
</svg></div>
<div id="wstrip"></div>
<div id="left"><svg class="abs" style="left:7px;top:5px" width="8" height="10"><path d="M2 1.5l3.5 3.5L2 8.5" fill="none" stroke="#555" stroke-width="1.2"/></svg><svg class="abs" style="left:22px;top:0px" width="16" height="16" viewBox="0 0 16 16"><path d="M7.9 1C4.5 1 4.7 2.5 4.7 2.5v1.5h3.3v.5H3.4S1.2 4.3 1.2 7.8s1.9 3.4 1.9 3.4h1.2V9.5s-.1-1.9 1.9-1.9h3.2s1.8 0 1.8-1.8V2.9S11.6 1 7.9 1zM6.1 2.1a.6.6 0 1 1 0 1.2.6.6 0 0 1 0-1.2z" fill="#3a78b8"/><path d="M8.1 15c3.4 0 3.2-1.5 3.2-1.5V12H8v-.5h4.6s2.2.2 2.2-3.3-1.9-3.4-1.9-3.4h-1.2v1.7s.1 1.9-1.9 1.9H6.6s-1.8 0-1.8 1.8v2.9S4.4 15 8.1 15zm1.8-1.1a.6.6 0 1 1 0-1.2.6.6 0 0 1 0 1.2z" fill="#f5c860"/></svg><div class="tr" style="left:43px;top:2px">&lt;python&gt;</div><svg class="abs" style="left:7px;top:23px" width="8" height="10"><path d="M2 1.5l3.5 3.5L2 8.5" fill="none" stroke="#555" stroke-width="1.2"/></svg><svg class="abs" style="left:22px;top:18px" width="16" height="16" viewBox="0 0 16 16"><path d="M7.9 1C4.5 1 4.7 2.5 4.7 2.5v1.5h3.3v.5H3.4S1.2 4.3 1.2 7.8s1.9 3.4 1.9 3.4h1.2V9.5s-.1-1.9 1.9-1.9h3.2s1.8 0 1.8-1.8V2.9S11.6 1 7.9 1zM6.1 2.1a.6.6 0 1 1 0 1.2.6.6 0 0 1 0-1.2z" fill="#3a78b8"/><path d="M8.1 15c3.4 0 3.2-1.5 3.2-1.5V12H8v-.5h4.6s2.2.2 2.2-3.3-1.9-3.4-1.9-3.4h-1.2v1.7s.1 1.9-1.9 1.9H6.6s-1.8 0-1.8 1.8v2.9S4.4 15 8.1 15zm1.8-1.1a.6.6 0 1 1 0-1.2.6.6 0 0 1 0 1.2z" fill="#f5c860"/></svg><div class="tr" style="left:43px;top:20px">rhinoscriptsyntax</div><svg class="abs" style="left:7px;top:41px" width="8" height="10"><path d="M2 1.5l3.5 3.5L2 8.5" fill="none" stroke="#555" stroke-width="1.2"/></svg><svg class="abs" style="left:22px;top:36px" width="16" height="16" viewBox="0 0 16 16"><path d="M7.9 1C4.5 1 4.7 2.5 4.7 2.5v1.5h3.3v.5H3.4S1.2 4.3 1.2 7.8s1.9 3.4 1.9 3.4h1.2V9.5s-.1-1.9 1.9-1.9h3.2s1.8 0 1.8-1.8V2.9S11.6 1 7.9 1zM6.1 2.1a.6.6 0 1 1 0 1.2.6.6 0 0 1 0-1.2z" fill="#3a78b8"/><path d="M8.1 15c3.4 0 3.2-1.5 3.2-1.5V12H8v-.5h4.6s2.2.2 2.2-3.3-1.9-3.4-1.9-3.4h-1.2v1.7s.1 1.9-1.9 1.9H6.6s-1.8 0-1.8 1.8v2.9S4.4 15 8.1 15zm1.8-1.1a.6.6 0 1 1 0-1.2.6.6 0 0 1 0 1.2z" fill="#f5c860"/></svg><div class="tr" style="left:43px;top:38px">scriptcontext</div><svg class="abs" style="left:7px;top:59px" width="8" height="10"><path d="M2 1.5l3.5 3.5L2 8.5" fill="none" stroke="#555" stroke-width="1.2"/></svg><svg class="abs" style="left:23px;top:55px" width="15" height="15"><path d="M2 6h8v8H2z" fill="none" stroke="#333" stroke-width="2"/><path d="M5 4h8v8M7 2h8v8" fill="none" stroke="#333" stroke-width="1"/></svg><div class="tr" style="left:43px;top:56px">Rhino</div><svg class="abs" style="left:7px;top:77px" width="8" height="10"><path d="M2 1.5l3.5 3.5L2 8.5" fill="none" stroke="#555" stroke-width="1.2"/></svg><svg class="abs" style="left:23px;top:73px" width="15" height="15"><path d="M2 6h8v8H2z" fill="none" stroke="#333" stroke-width="2"/><path d="M5 4h8v8M7 2h8v8" fill="none" stroke="#333" stroke-width="1"/></svg><div class="tr" style="left:43px;top:74px">Eto</div></div>
<div id="ed">
<svg class="abs" style="left:0;top:0" width="625" height="30"><defs><linearGradient id="gtab" x1="0" y1="0" x2="0" y2="1"><stop offset="0" stop-color="#ececec"/><stop offset="1" stop-color="#d4d4d4"/></linearGradient></defs><rect x="0" y="26.0" width="625" height="1" fill="#6e6e6e"/><rect x="0" y="27.0" width="625" height="2" fill="#ffffff"/><rect x="0" y="29.0" width="625" height="1" fill="#6e6e6e"/><path d="M0.0 26.5 L0.0 8.5 L6.5 2.5 L82.0 2.5 L85.5 5.5 L85.5 26.5" fill="url(#gtab)" stroke="#8c8c8c" stroke-width="1"/><path d="M87.5 26.5 L87.5 5.5 L90.5 2.5 L165.0 2.5 L168.0 5.0 L168.0 26.5" fill="url(#gtab)" stroke="#8c8c8c" stroke-width="1"/><path d="M245.5 26.5 L254.5 3.5 L284.5 3.5 L287.5 6.5 L287.5 26.5" fill="#f2f2f2" stroke="#8c8c8c" stroke-width="1"/><path d="M150.0 28.5 L172.5 3.5 L240.5 3.5 L243.5 6.5 L243.5 28.5" fill="#f6f6f6" stroke="#8c8c8c" stroke-width="1"/><rect x="151.5" y="26.0" width="92" height="3" fill="#fafafa"/><g opacity=".55"><circle cx="74.0" cy="14.6" r="6.5" fill="#c8c8c8"/><path d="M71.0 11.6l6 6m0 -6l-6 6" stroke="#fff" stroke-width="1.8"/></g><g opacity=".55"><circle cx="154.0" cy="14.6" r="6.5" fill="#c8c8c8"/><path d="M151.0 11.6l6 6m0 -6l-6 6" stroke="#fff" stroke-width="1.8"/></g><g opacity="1"><circle cx="232.0" cy="14.6" r="6.5" fill="#c4c4c4"/><path d="M229.0 11.6l6 6m0 -6l-6 6" stroke="#fff" stroke-width="1.8"/></g><path d="M264.5 7.5 L271.5 7.5 L275.5 11.5 L275.5 22.5 L264.5 22.5 L264.5 7.5" fill="#fff" stroke="#111" stroke-width="1.1"/><path d="M271.5 7.5 L271.5 11.5 L275.5 11.5" fill="none" stroke="#111" stroke-width=".8"/></svg><div class="tabt" style="left:7px">{untitled}*</div><div class="tabt" style="left:93px">{untitled}</div><div class="tabt" style="left:174px">Hu02.py</div><div id="code"><div id="gut"></div><div id="dots"></div><div id="edge"></div><div class="ln" style="top:1px">13</div><div class="cl" style="top:0px">yVal = <span class="n">4</span></div>
<div class="ln" style="top:12px">14</div><div class="cl" style="top:11px">zVal = <span class="n">4</span></div>
<div class="ln" style="top:23px">15</div><div class="cl" style="top:22px"></div>
<div class="ln" style="top:34px">16</div><div class="cl" style="top:33px"><span class="k">for</span> <span class="v">i</span> <span class="k">in</span> <span class="f">range</span>(anzahl):</div>
<div class="ln" style="top:45px">17</div><div class="cl" style="top:44px"><span class="d">....</span><span class="k">for</span> <span class="v">j</span> <span class="k">in</span> <span class="f">range</span>(anzahl):</div>
<div class="ln" style="top:56px">18</div><div class="cl" style="top:55px"><span class="d">........</span><span class="k">for</span> <span class="v">k</span> <span class="k">in</span> <span class="f">range</span>(anzahl):</div>
<div class="ln" style="top:67px">19</div><div class="cl" style="top:66px"><span class="d">............</span>x = i*xVal + random.<span class="f">uniform</span>(<span class="n">0.01</span>, xVal) -<span class="n">40</span></div>
<div class="ln" style="top:78px">20</div><div class="cl" style="top:77px"><span class="d">............</span>y = j*yVal + random.<span class="f">uniform</span>(<span class="n">0.01</span>, yVal) -<span class="n">40</span></div>
<div class="ln" style="top:89px">21</div><div class="cl" style="top:88px"><span class="d">............</span>z = k*zVal + random.<span class="f">uniform</span>(<span class="n">0.01</span>, zVal) -<span class="n">40</span></div>
<div class="ln" style="top:100px">22</div><div class="cl" style="top:99px"><span class="d">............</span></div>
<div class="ln" style="top:111px">23</div><div class="cl" style="top:110px"><span class="d">............</span>cor = [x, y, z]</div>
<div class="ln" style="top:122px">24</div><div class="cl" style="top:121px"><span class="d">............</span>coords.<span class="f">append</span>(cor)</div>
<div class="ln" style="top:133px">25</div><div class="cl" style="top:132px"></div>
<div class="ln" style="top:144px">26</div><div class="cl" style="top:143px">points = rs.<span class="f">AddPoints</span>(coords)</div>
<div class="ln" style="top:155px">27</div><div class="cl" style="top:154px"></div>
<div class="ln" style="top:166px">28</div><div class="cl" style="top:165px"><span class="c">#################################################</span></div>
<div class="ln" style="top:177px">29</div><div class="cl" style="top:176px"></div>
<div class="ln" style="top:188px">30</div><div class="cl" style="top:187px">coords2 = []</div>
<div class="ln" style="top:199px">31</div><div class="cl" style="top:198px">anzahl2 = <span class="n">2</span></div>
<div class="ln" style="top:210px">32</div><div class="cl" style="top:209px">xVal2 = <span class="n">120</span></div>
<div class="ln" style="top:221px">33</div><div class="cl" style="top:220px">yVal2 = <span class="n">120</span></div>
<div class="ln" style="top:232px">34</div><div class="cl" style="top:231px">zVal2 = <span class="n">120</span></div>
<div class="ln" style="top:243px">35</div><div class="cl" style="top:242px"></div>
<div class="ln" style="top:254px">36</div><div class="cl" style="top:253px"><span class="k">for</span> <span class="v">a</span> <span class="k">in</span> <span class="f">range</span>(anzahl2):</div>
<div class="ln" style="top:265px">37</div><div class="cl" style="top:264px"><span class="d">....</span><span class="k">for</span> <span class="v">b</span> <span class="k">in</span> <span class="f">range</span>(anzahl2):</div>
<div class="ln" style="top:276px">38</div><div class="cl" style="top:275px"><span class="d">........</span><span class="k">for</span> <span class="v">c</span> <span class="k">in</span> <span class="f">range</span>(anzahl2):</div>
<div class="ln" style="top:287px">39</div><div class="cl" style="top:286px"><span class="d">............</span>x2 = a*xVal2 - <span class="n">60</span></div>
<div class="ln" style="top:298px">40</div><div class="cl" style="top:297px"><span class="d">............</span>y2 = b*yVal2 - <span class="n">60</span></div>
<div class="ln" style="top:309px">41</div><div class="cl" style="top:308px"><span class="d">............</span>z2 = c*zVal2 -<span class="n">60</span></div>
<div class="ln" style="top:320px">42</div><div class="cl" style="top:319px"><span class="d">............</span></div>
<div class="ln" style="top:331px">43</div><div class="cl" style="top:330px"><span class="d">............</span>cor2 = [x2, y2, z2 ]</div>
<div class="ln" style="top:342px">44</div><div class="cl" style="top:341px"><span class="d">............</span>coords2.<span class="f">append</span>(cor2)</div>
<div class="ln" style="top:353px">45</div><div class="cl" style="top:352px"></div>
<div class="ln" style="top:364px">46</div><div class="cl" style="top:363px">points2 = rs.<span class="f">AddPoints</span>(coords2)</div>
<div class="ln" style="top:375px">47</div><div class="cl" style="top:374px"></div>
<div class="ln" style="top:386px">48</div><div class="cl" style="top:385px"><span class="c">#######################################</span></div>
<div class="ln" style="top:397px">49</div><div class="cl" style="top:396px"></div>
<div class="ln" style="top:408px">50</div><div class="cl" style="top:407px">coordsrod = []</div>
<div class="ln" style="top:419px">51</div><div class="cl" style="top:418px"><span class="k">for</span> <span class="v">a1</span> <span class="k">in</span> <span class="f">range</span>(<span class="n">5</span>):</div>
<div class="ln" style="top:430px">52</div><div class="cl" style="top:429px"><span class="d">....</span><span class="k">for</span> <span class="v">b1</span> <span class="k">in</span> <span class="f">range</span>(<span class="n">5</span>):</div>
<div class="ln" style="top:441px">53</div><div class="cl" style="top:440px"><span class="d">........</span><span class="k">for</span> <span class="v">c1</span> <span class="k">in</span> <span class="f">range</span>(<span class="n">40</span>):</div>
<div class="ln" style="top:452px">54</div><div class="cl" style="top:451px"><span class="d">............</span>x3 = a1*xVal-<span class="n">8</span></div>
<div class="ln" style="top:463px">55</div><div class="cl" style="top:462px"><span class="d">............</span>y3 = b1*yVal-<span class="n">8</span></div>
<div class="ln" style="top:474px">56</div><div class="cl" style="top:473px"><span class="d">............</span>z3 = c1*zVal-<span class="n">80</span></div>
<div class="ln" style="top:485px">57</div><div class="cl" style="top:484px"><span class="d">............</span></div>
<div class="ln" style="top:496px">58</div><div class="cl" style="top:495px"><span class="d">............</span>corrod = (x3+<span class="n">80</span>, y3+<span class="n">80</span>, z3 )</div></div><div id="vsb"><div id="vth"></div></div><div id="hsb"><div id="hth"></div></div></div><div id="out"></div></div></body></html>
